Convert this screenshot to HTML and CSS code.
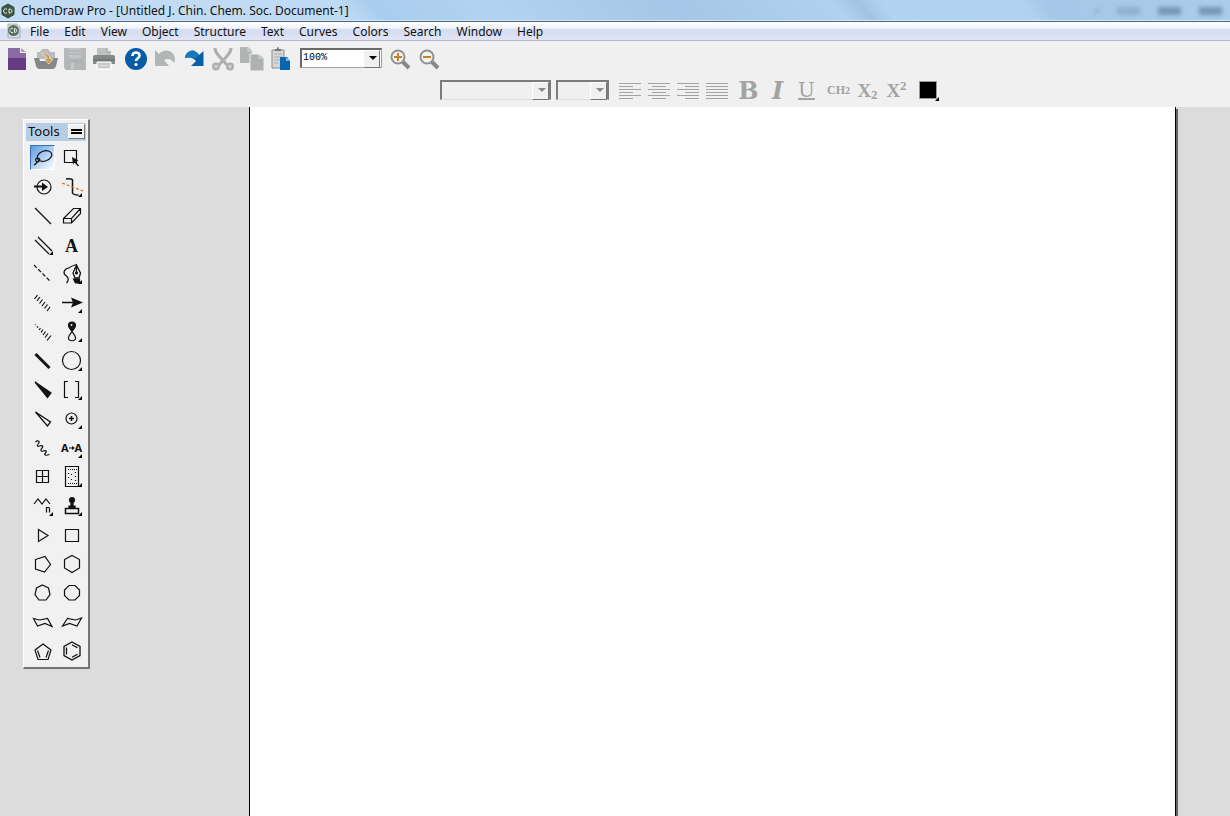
FILE: index.html
```
<!DOCTYPE html>
<html lang="en">
<head>
    <meta charset="UTF-8">
    <meta name="viewport" content="width=device-width, initial-scale=1.0">
    <title>ChemDraw Pro</title>
    <link rel="stylesheet" href="styles.css">
</head>
<body>
    <svg class="defs" aria-hidden="true">
        <symbol id="corner" viewBox="0 0 29 29"><path d="M25 21v4h-4z" fill="#000"/></symbol>
    </svg>

    <header class="titlebar">
        <svg class="logo" width="16" height="16" viewBox="0 0 16 16">
            <path d="M8 1l6 3.500v7L8 15l-6-3.500v-7z" fill="#3d5847" stroke="#2b4335"/>
            <path d="M7 6.200a2.200 2.200 0 1 0 0 3.600M9 6v4h1c2.600 0 2.600-4 0-4z" fill="none" stroke="#e4eee6"/>
        </svg>
        <h1>ChemDraw Pro - [Untitled J. Chin. Chem. Soc. Document-1]</h1>
        <div class="window-marks"><span class="dot"></span><span></span><span class="dark"></span><span class="dark"></span></div>
    </header>

    <nav class="menubar">
        <svg width="16" height="16" viewBox="0 0 16 16">
            <path d="M2 1h9l3 3v11H2z" fill="#d7dbe0" stroke="#a9b0b5"/>
            <circle cx="7.500" cy="7.500" r="5.500" fill="#587061"/>
            <path d="M7 5.500a2.200 2.200 0 1 0 0 4M8.500 5.500v4c3 0 3-4 0-4z" fill="none" stroke="#e4eee6"/>
        </svg>
        <button>File</button>
        <button>Edit</button>
        <button>View</button>
        <button>Object</button>
        <button>Structure</button>
        <button>Text</button>
        <button>Curves</button>
        <button>Colors</button>
        <button>Search</button>
        <button>Window</button>
        <button>Help</button>
    </nav>

    <div class="toolbar">
        <button class="tool" aria-label="New">
            <svg viewBox="0 0 29 29"><path d="M6 4h12v5h6v17H6z" fill="#8c6ba4"/><path d="M6 14h18v12H6z" fill="#673a86"/><path d="M19 4l5 4h-5z" fill="#a9a3ae"/></svg>
        </button>
        <button class="tool" aria-label="Open">
            <svg viewBox="0 0 29 29"><path d="M6 15V8h3l2-3h6l2 3h5v7z" fill="#b9bcbc"/><path d="M3 14h5l1 3h11l1-3h6l-2 8q-1 3-3 3H8q-2 0-3-3z" fill="#858888"/><path d="M11 9q8 0 8 6h3l-4 5-5-5h3q0-4-5-4z" fill="#d4954b" stroke="#f3e7d5" stroke-width=".7"/></svg>
        </button>
        <button class="tool" aria-label="Save" disabled>
            <svg viewBox="0 0 29 29"><path d="M4 4h22v22H6l-2-2z" fill="#b5b8b8"/><path d="M9 4h12v10H9z" fill="#c3c6c6"/><path d="M9 7h12M9 10h12M8 17h14v9M8 17v9" fill="none" stroke="#a9acac"/><path d="M11 19h3v6h-3z" fill="#c9cbcb"/></svg>
        </button>
        <button class="tool" aria-label="Print">
            <svg viewBox="0 0 29 29"><path d="M8 4h10l4 4v5H8z" fill="#bfc1c1"/><path d="M18 4v4h4" fill="#eee" stroke="#999"/><path d="M6 11h18q2 0 2 2v7H4v-7q0-2 2-2z" fill="#858888"/><path d="M4 16h22" stroke="#6c6f6f"/><path d="M8 18h14v7H8z" fill="#ddd" stroke="#fff"/><path d="M9 20h12M9 23h12" stroke="#b5b5b5"/></svg>
        </button>
        <button class="tool group-start" aria-label="Help">
            <svg viewBox="0 0 29 29"><circle cx="15" cy="15" r="11" fill="#075da5"/><path d="M11.500 12q0-3.500 3.500-3.500t3.500 3.200c0 2.600-3.500 2.500-3.500 5.300" fill="none" stroke="#fff" stroke-width="2.600"/><circle cx="15" cy="20.500" r="1.600" fill="#fff"/></svg>
        </button>
        <button class="tool" aria-label="Undo" disabled>
            <svg viewBox="0 0 29 29"><path d="M5 6l4 4q4-5 10-3 6 2 6 9l-1 3q-4-6-10-3l5 6H5z" fill="#b3b6b6"/></svg>
        </button>
        <button class="tool" aria-label="Redo">
            <svg viewBox="0 0 29 29"><path d="M24.500 7v15H12l5-5q-4-5-11-3 1-5 5-7t9 4z" fill="#075fa8"/><path d="M20 11q-4-6-9-4t-5 7q6-2 9 1z" fill="#1679bd"/></svg>
        </button>
        <button class="tool" aria-label="Cut" disabled>
            <svg viewBox="0 0 29 29"><path d="M7 4q0 4 4 8l8 9M23 4q0 4-4 8l-8 9" fill="none" stroke="#acafaf" stroke-width="3"/><circle cx="8" cy="22.500" r="3" fill="#ccc" stroke="#acafaf" stroke-width="2"/><circle cx="22" cy="22.500" r="3" fill="#ccc" stroke="#acafaf" stroke-width="2"/></svg>
        </button>
        <button class="tool" aria-label="Copy" disabled>
            <svg viewBox="0 0 29 29"><path d="M3 3h8l4 4v12H3z" fill="#b1b4b4"/><path d="M13 10h9l5 4v13H13z" fill="#afb2b2" stroke="#f0f0f0"/><path d="M22 10v4h4M11 3v4h4" fill="none" stroke="#dadada"/></svg>
        </button>
        <button class="tool" aria-label="Paste">
            <svg viewBox="0 0 29 29"><path d="M6 6h12v18H6z" fill="#d5d7d7" stroke="#8b8e8e"/><path d="M9 7V5h2q0-2 1-2t1 2h2v2z" fill="#777"/><path d="M8 10h8M8 13h8M8 16h6M8 19h5" stroke="#aeb0b0"/><path d="M14 13h7l3 4v9H14z" fill="#0866b0"/><path d="M20 13l4 4h-4z" fill="#78b5e2"/></svg>
        </button>
        <div class="combo zoom-level">
            <select aria-label="Zoom level"><option>100%</option><option>200%</option></select>
        </div>
        <button class="tool" aria-label="Zoom in">
            <svg viewBox="0 0 29 29"><path d="M18 18l6 6" stroke="#858888" stroke-width="4"/><circle cx="13" cy="13" r="6.500" fill="#f6f2ec" stroke="#8e9191" stroke-width="2"/><path d="M9 13h8M13 9v8" stroke="#c67f2c" stroke-width="2"/></svg>
        </button>
        <button class="tool" aria-label="Zoom out">
            <svg viewBox="0 0 29 29"><path d="M18 18l6 6" stroke="#858888" stroke-width="4"/><circle cx="13" cy="13" r="6.500" fill="#f6f2ec" stroke="#8e9191" stroke-width="2"/><path d="M9 13h8" stroke="#c67f2c" stroke-width="2"/></svg>
        </button>
    </div>

    <div class="toolbar format-bar">
        <div class="combo font-name"><select aria-label="Font" disabled></select></div>
        <div class="combo font-size"><select aria-label="Font size" disabled></select></div>
        <button class="tool first" aria-label="Align left" disabled>
            <svg viewBox="0 0 29 29"><path d="M4 7.500h22M4 10.500h14M4 13.500h22M4 16.500h14M4 19.500h22M4 22.500h14" stroke="#a3a3a3"/></svg>
        </button>
        <button class="tool" aria-label="Align center" disabled>
            <svg viewBox="0 0 29 29"><path d="M4 7.500h22M8 10.500h14M4 13.500h22M8 16.500h14M4 19.500h22M8 22.500h14" stroke="#a3a3a3"/></svg>
        </button>
        <button class="tool" aria-label="Align right" disabled>
            <svg viewBox="0 0 29 29"><path d="M4 7.500h22M12 10.500h14M4 13.500h22M12 16.500h14M4 19.500h22M12 22.500h14" stroke="#a3a3a3"/></svg>
        </button>
        <button class="tool" aria-label="Justify" disabled>
            <svg viewBox="0 0 29 29"><path d="M4 7.500h22M4 10.500h22M4 13.500h22M4 16.500h22M4 19.500h22M4 22.500h22" stroke="#a3a3a3"/></svg>
        </button>
        <button class="tool group-start letter bold" disabled>B</button>
        <button class="tool letter italic" disabled>I</button>
        <button class="tool letter underline" disabled>U</button>
        <button class="tool group-start letter formula" disabled>CH<small>2</small></button>
        <button class="tool letter script" disabled>X<sub>2</sub></button>
        <button class="tool letter script" disabled>X<sup>2</sup></button>
        <button class="tool group-start" aria-label="Color">
            <svg viewBox="0 0 29 29"><path d="M5.500 5.500h17v17h-17z" fill="#000" stroke="#999"/><path d="M25 21v4h-4z" fill="#000"/></svg>
        </button>
    </div>

    <main class="workspace">
        <aside class="palette">
            <div class="palette-title">
                <h2>Tools</h2>
                <button aria-label="Tools menu"></button>
            </div>
            <div class="palette-grid">
                <button class="tool selected" aria-label="Lasso">
                    <svg viewBox="0 0 29 29"><ellipse cx="16.500" cy="13" rx="7.500" ry="5" transform="rotate(-18 16.500 13)"/><path d="M9 15q-2 1-1 3t3 0-1-3M9 18q0 3-3 4"/></svg>
                </button>
                <button class="tool" aria-label="Marquee">
                    <svg viewBox="0 0 29 29"><path d="M7.500 7.500h12v12h-12z"/><path class="solid" d="M15 14l6.500 3.500-3 1 3.500 4-1 1-3.500-4-1.500 2z" stroke="none"/></svg>
                </button>
                <button class="tool" aria-label="Structure perspective">
                    <svg viewBox="0 0 29 29"><circle cx="16" cy="15" r="7"/><path d="M6 14.500h9" stroke-width="2"/><path class="solid" d="M14 10.500l6 4.500-6 4z" stroke="none"/></svg>
                </button>
                <button class="tool" aria-label="Mass fragmentation">
                    <svg viewBox="0 0 29 29"><path d="M9 7q6-1 6.500 1v13q1 2 6 2" stroke-width="1.500"/><path d="M5 11l21 8" stroke="#d07530" stroke-dasharray="3 2"/><use href="#corner"/></svg>
                </button>
                <button class="tool" aria-label="Solid bond">
                    <svg viewBox="0 0 29 29"><path d="M7 7l16 16"/></svg>
                </button>
                <button class="tool" aria-label="Eraser">
                    <svg viewBox="0 0 29 29"><path d="M6.500 17.500l10-10h7v5l-9 9.500h-8zM6.500 17.500h8l9-10M14.500 17.500V22"/></svg>
                </button>
                <button class="tool" aria-label="Multiple bonds">
                    <svg viewBox="0 0 29 29"><path d="M7 10l14 14M10 7l14 14"/><use href="#corner"/></svg>
                </button>
                <button class="tool letter text-tool">A</button>
                <button class="tool" aria-label="Dashed bond">
                    <svg viewBox="0 0 29 29"><path d="M6 6l17 17" stroke-dasharray="4 2"/></svg>
                </button>
                <button class="tool" aria-label="Pen">
                    <svg viewBox="0 0 29 29"><path d="M9.500 24c3-3 2-5 0-7-4-2-3-7 2-8q3-2 8-3.500"/><path d="M19.500 6l-3.500 8 2 5h4l1.500-5zM19.500 6v8" stroke-width="1.300"/><circle class="solid" cx="19.500" cy="14" r="1"/><path class="solid" d="M16.500 20h6v4h-4z"/><use href="#corner"/></svg>
                </button>
                <button class="tool" aria-label="Hashed bond">
                    <svg viewBox="0 0 29 29"><path d="M6.500 11l3-4M9 13l3-4M11.500 15.500l3-4M14 18l3-4M16.500 20.500l3-4M19 23l3-4"/></svg>
                </button>
                <button class="tool" aria-label="Arrow">
                    <svg viewBox="0 0 29 29"><path d="M5 14.500h12" stroke-width="1.500"/><path class="solid" d="M14 9.500l12 5-12 5 2-5z" stroke="none"/><use href="#corner"/></svg>
                </button>
                <button class="tool" aria-label="Hashed wedged bond">
                    <svg viewBox="0 0 29 29"><path d="M7 8l.5-.5M9 10.500l1-1M11 13l1.500-2M13 15.500l2-3M15 18l2.500-3.500M17 20.500l3-4M19 23.500l4-5"/></svg>
                </button>
                <button class="tool" aria-label="Orbital">
                    <svg viewBox="0 0 29 29"><path d="M15 14.500c-2-3-3.500-4-3.500-6a3.500 3.500 0 0 1 7 0c0 2-1.500 3-3.500 6z" fill="#111"/><path d="M15 14.500c-2 3-4 5-3.500 7 .5 3 6.500 3 7 0 .5-2-1.500-4-3.500-7z"/><circle cx="14.500" cy="8" r="1" fill="#eee" stroke="none"/><use href="#corner"/></svg>
                </button>
                <button class="tool" aria-label="Bold bond">
                    <svg viewBox="0 0 29 29"><path d="M7.500 8l14 14" stroke-width="3"/></svg>
                </button>
                <button class="tool" aria-label="Circle">
                    <svg viewBox="0 0 29 29"><circle cx="14.500" cy="14.500" r="9"/><use href="#corner"/></svg>
                </button>
                <button class="tool" aria-label="Wedged bond">
                    <svg viewBox="0 0 29 29"><path class="solid" d="M7 7l16 11-3.500 4.500z"/></svg>
                </button>
                <button class="tool" aria-label="Brackets">
                    <svg viewBox="0 0 29 29"><path d="M11 6.500H7.500v16H11M18 6.500h3.500v16H18"/><use href="#corner"/></svg>
                </button>
                <button class="tool" aria-label="Hollow wedged bond">
                    <svg viewBox="0 0 29 29"><path d="M7.500 8l15 10-3 4z" stroke-width="1.300"/></svg>
                </button>
                <button class="tool" aria-label="Charge">
                    <svg viewBox="0 0 29 29"><circle cx="14.500" cy="14.500" r="5.500"/><path d="M12 14.500h5M14.500 12v5" stroke-width="1.500"/><use href="#corner"/></svg>
                </button>
                <button class="tool" aria-label="Wavy bond">
                    <svg viewBox="0 0 29 29"><path d="M7.500 9c2-2 5-1 3 1.500s-1 3.500 1 2.500 4.500 0 2.500 2-1 4 1 3 4.500 0 2.500 2 0 3 4 1.500"/></svg>
                </button>
                <button class="tool atom-map" aria-label="Atom map">A<svg viewBox="0 0 6 6"><path class="solid" d="M0 2.500h3V1l3 2-3 2V3.500H0z" stroke="none"/></svg>A
                    <svg class="over" viewBox="0 0 29 29"><use href="#corner"/></svg>
                </button>
                <button class="tool" aria-label="Table">
                    <svg viewBox="0 0 29 29"><path d="M8.500 8.500h12v12h-12zM14.500 8.500v12M8.500 14.500h12"/></svg>
                </button>
                <button class="tool" aria-label="TLC plate">
                    <svg viewBox="0 0 29 29"><path d="M8.500 4.500h13v20h-13z"/><path d="M11 7.500h9M11 21.500h9" stroke-dasharray="1 1"/><path d="M11.500 11v7M18.500 10v9" stroke-dasharray="1 3"/><path d="M14.500 12v6" stroke-dasharray="1 4"/><use href="#corner"/></svg>
                </button>
                <button class="tool" aria-label="Acyclic chain">
                    <svg viewBox="0 0 29 29"><path d="M6 13l4-5 4 5 4-5 4 5M18.500 21.500v-5h2q1 0 1 1v4"/><use href="#corner"/></svg>
                </button>
                <button class="tool" aria-label="Templates">
                    <svg viewBox="0 0 29 29"><circle class="solid" cx="15" cy="9" r="2.500"/><path class="solid" d="M14 11h2v4h2v2h-6v-2h2z"/><path d="M8.500 17.500h13v5h-13z" stroke-width="1.500"/><use href="#corner"/></svg>
                </button>
                <button class="tool" aria-label="Cyclopropane">
                    <svg viewBox="0 0 29 29"><path d="M10.500 9.500l9.500 6-9.500 6z"/></svg>
                </button>
                <button class="tool" aria-label="Cyclobutane">
                    <svg viewBox="0 0 29 29"><path d="M8.500 9.500h13v12h-13z"/></svg>
                </button>
                <button class="tool" aria-label="Cyclopentane">
                    <svg viewBox="0 0 29 29"><path d="M7.500 10.500l9.500-3 5.500 8-6 7.500-9-3z"/></svg>
                </button>
                <button class="tool" aria-label="Cyclohexane">
                    <svg viewBox="0 0 29 29"><path d="M15 6.500l7.500 4v8.500L15 23.500 7.500 19v-8.500z"/></svg>
                </button>
                <button class="tool" aria-label="Cycloheptane">
                    <svg viewBox="0 0 29 29"><path d="M14.500 7l6 3 1.500 6.500-4 5.500h-7l-4-5.500L8.500 10z"/></svg>
                </button>
                <button class="tool" aria-label="Cyclooctane">
                    <svg viewBox="0 0 29 29"><path d="M12 7.500h6l4.500 4.500v5.500L18 22h-6l-4.500-4.500V12z"/></svg>
                </button>
                <button class="tool" aria-label="Chair left">
                    <svg viewBox="0 0 29 29"><path d="M5.500 11.500l6 1.500 8-1.500 4.500 8-7-3-7.500 2.500z"/></svg>
                </button>
                <button class="tool" aria-label="Chair right">
                    <svg viewBox="0 0 29 29"><path d="M24.500 11l-6 2-8-1.500-5 7.500 7-2.500 7.500 2.500z"/></svg>
                </button>
                <button class="tool" aria-label="Cyclopentadiene">
                    <svg viewBox="0 0 29 29"><path d="M15 8l8 6-3 9.500H10L7 14zM9.500 14.500l2.500 7M20.500 14.500l-2.500 7"/></svg>
                </button>
                <button class="tool" aria-label="Benzene">
                    <svg viewBox="0 0 29 29"><path d="M15 6l8 4.500v9L15 24l-8-4.500v-9zM9.500 11.500v7M15 8.800l5.500 3M15 21.200l5.500-3" stroke-width="1.300"/></svg>
                </button>
            </div>
        </aside>
        <section class="page" aria-label="Document"></section>
    </main>
</body>
</html>
```
FILE: styles.css
```
* {
    box-sizing: border-box;
}
body {
    margin: 0;
    min-height: 100vh;
    display: flex;
    flex-direction: column;
    font-family: "Noto Sans", sans-serif;
    font-size: 12px;
    color: #111;
    background: #f0f0f0;
}
h1, h2 {
    margin: 0;
    font-size: 12px;
    font-weight: normal;
}
button {
    padding: 0;
    border: 0;
    background: none;
    font: inherit;
    color: inherit;
}
.defs {
    display: none;
}
.titlebar {
    display: flex;
    align-items: center;
    gap: 5px;
    height: 22px;
    border-bottom: 1px solid #4d6680;
    box-shadow: inset 0 -1px #d5e9fa;
    background: linear-gradient(50deg, #c3dcf3 0%, #bfdaf3 28%, #a9cdee 31%, #b2d3f1 40%, #a5c6e6 55%, #b0d2f0 68%, #a3c3e3 70%, #b1d4f3 72%, #b1d2f0 83%, #a5c8e8 85%, #abcdec 100%);
}
.titlebar h1 {
    flex: 1;
}
.window-marks {
    display: flex;
    align-items: center;
    gap: 18px;
    padding-right: 8px;
}
.window-marks span {
    width: 23px;
    height: 8px;
    background: #8fb0cf;
    filter: blur(2px);
}
.window-marks .dot {
    width: 4px;
    height: 4px;
}
.window-marks .dark {
    background: #7595b5;
}
.menubar {
    display: flex;
    align-items: center;
    gap: 1px;
    height: 19px;
    padding-left: 6px;
    border-bottom: 1px solid #b4b9ca;
    background: linear-gradient(#fff 0%, #f3f6fc 30%, #d5dcf0 45%, #dfe5f6 100%);
}
.menubar button {
    padding: 1px 7px 0;
    line-height: 18px;
}
.toolbar {
    display: flex;
    align-items: center;
    height: 34px;
    padding-left: 2px;
}
.format-bar {
    height: 32px;
    padding-bottom: 2px;
    padding-left: 440px;
}
.tool {
    flex: none;
    width: 29px;
    height: 29px;
}
.tool svg {
    display: block;
}
.tool.group-start {
    margin-left: 3px;
}
.tool.first {
    margin-left: 6px;
}
.combo {
    position: relative;
    height: 20px;
}
.combo select {
    display: block;
    width: 100%;
    height: 100%;
    padding: 0 0 2px 1px;
    appearance: none;
    border: 1px solid #a0a0a0;
    border-top: 2px solid #696969;
    border-left: 2px solid #696969;
    border-radius: 0;
    background: #fff;
    color: #000;
    font: 10px "Liberation Mono", monospace;
}
.combo select:disabled {
    border: 2px solid #7c7c7c;
    border-bottom: 1px solid #ddd;
    background: #f0f0f0;
    opacity: 1;
}
/* drop-down button */
.combo::before {
    content: "";
    position: absolute;
    top: 2px;
    right: 2px;
    width: 15px;
    height: 16px;
    border: 1px solid #fff;
    border-right-color: #777;
    border-bottom-color: #777;
    background: #f0f0f0;
    pointer-events: none;
}
.combo::after {
    content: "";
    position: absolute;
    top: 8px;
    right: 5px;
    border: 4px solid transparent;
    border-top-color: #000;
    border-bottom: 0;
    pointer-events: none;
}
.format-bar .combo::after {
    border-top-color: #8a8a8a;
}
.zoom-level {
    width: 82px;
    margin: 0 3px 0 5px;
}
.font-name {
    width: 111px;
}
.font-size {
    width: 53px;
    margin-left: 5px;
}
.letter {
    font-family: "DejaVu Serif", serif;
    font-weight: bold;
    color: #a3a3a3;
    line-height: 29px;
    white-space: nowrap;
}
.bold, .italic {
    font-size: 24px;
}
.italic {
    font-style: italic;
}
.underline {
    font-size: 20px;
    font-weight: normal;
    line-height: 26px;
    text-decoration: underline;
    text-decoration-thickness: 2px;
}
.formula {
    font-family: "Liberation Serif", serif;
    font-size: 12px;
}
.formula small {
    font-size: 10px;
}
.script {
    font-family: "Liberation Serif", serif;
    font-size: 19px;
}
.script sub, .script sup {
    font-size: 13px;
    line-height: 1;
}
.script sub {
    vertical-align: -2px;
}
.text-tool {
    padding-top: 2px;
    font-family: "Liberation Serif", serif;
    font-size: 18px;
    color: #111;
}
.workspace {
    flex: 1;
    display: flex;
    align-items: flex-start;
    background: #dcdcdc;
}
.palette {
    flex: none;
    width: 67px;
    margin: 12px 0 12px 23px;
    padding: 3px 2px 2px;
    border: 1px solid #fff;
    border-right: 2px solid #747474;
    border-bottom: 2px solid #747474;
    background: #f1f1f1;
}
.palette-title {
    display: flex;
    align-items: center;
    justify-content: space-between;
    height: 18px;
    padding: 0 1px 1px 2px;
    background: #b7cde6;
}
.palette-title h2 {
    font-size: 13px;
    line-height: 17px;
}
.palette-title button {
    width: 17px;
    height: 15px;
    padding: 4px 2px;
    border: 1px solid #fff;
    border-right-color: #777;
    border-bottom-color: #777;
    background: linear-gradient(#000 0 2px, #f0f0f0 2px 3px, #000 3px 5px, #f0f0f0 5px) content-box, #f0f0f0;
}
.palette-grid {
    display: grid;
    grid-template-columns: 29px 29px;
    padding: 2px 0 0 2px;
}
.palette svg {
    fill: none;
    stroke: #111;
    stroke-width: 1.2;
}
.palette .solid {
    fill: #111;
}
.palette use {
    stroke: none;
}
.selected {
    width: 25px;
    height: 25px;
    margin: 2px;
    border: 1px solid #3c6fae;
    border-right-color: #fff;
    border-bottom-color: #fff;
    background: linear-gradient(135deg, #5b9be0, #cfe3f8 70%, #fff);
}
.selected svg {
    margin: -3px;
    width: 29px;
}
.atom-map {
    position: relative;
    display: flex;
    align-items: center;
    justify-content: center;
    font-size: 11px;
    font-weight: bold;
}
.atom-map svg {
    width: 6px;
}
.atom-map .over {
    position: absolute;
    top: 0;
    left: 0;
    width: 29px;
}
.page {
    flex: 1;
    align-self: stretch;
    margin: 0 54px 0 159px;
    border: solid #000;
    border-width: 0 1px;
    background: #fff;
    box-shadow: 2px 2px #666;
}
```
